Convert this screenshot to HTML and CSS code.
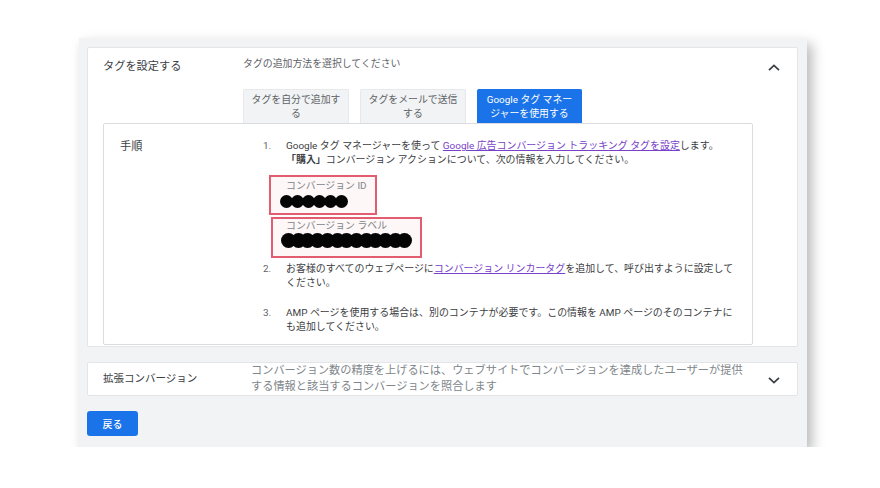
FILE: index.html
```html
<!DOCTYPE html>
<html lang="ja">
<head>
<meta charset="utf-8">
<title>タグを設定する</title>
<link rel="stylesheet" href="styles.css">
</head>
<body>
<div class="panel">
  <section class="card card-tag">
    <div class="card-head">
      <div class="card-title">タグを設定する</div>
      <div class="card-desc">タグの追加方法を選択してください</div>
      <svg class="chev chev-up" width="12" height="7" viewBox="0 0 12 7"><path d="M1 6.2 6 1.4l5 4.8" fill="none" stroke="#3c4043" stroke-width="1.8"/></svg>
    </div>
    <div class="tabs">
      <div class="tab">タグを自分で追加す<br>る</div>
      <div class="tab">タグをメールで送信<br>する</div>
      <div class="tab tab-active">Google タグ マネー<br>ジャーを使用する</div>
    </div>
    <div class="steps-box">
      <div class="steps-label">手順</div>
      <ol class="steps">
        <li class="step">
          <span class="num">1.</span>
          <div class="txt">
            <p>Google タグ マネージャーを使って <a href="#">Google 広告コンバージョン トラッキング タグを設定</a>します。<br><b>「購入」</b>コンバージョン アクションについて、次の情報を入力してください。</p>
            <div class="redbox redbox-id">
              <div class="field-label">コンバージョン ID</div>
              <div class="blackout bo-id"><i></i><i></i><i></i><i></i><i></i><i></i></div>
            </div>
            <div class="redbox redbox-label">
              <div class="field-label">コンバージョン ラベル</div>
              <div class="blackout bo-label"><i></i><i></i><i></i><i></i><i></i><i></i><i></i><i></i><i></i><i></i><i></i><i></i><i></i></div>
            </div>
          </div>
        </li>
        <li class="step step-2">
          <span class="num">2.</span>
          <div class="txt"><p>お客様のすべてのウェブページに<a href="#">コンバージョン リンカータグ</a>を追加して、呼び出すように設定して<br>ください。</p></div>
        </li>
        <li class="step step-3">
          <span class="num">3.</span>
          <div class="txt"><p>AMP ページを使用する場合は、別のコンテナが必要です。この情報を AMP ページのそのコンテナに<br>も追加してください。</p></div>
        </li>
      </ol>
    </div>
  </section>

  <section class="card card-ext">
    <div class="ext-title">拡張コンバージョン</div>
    <div class="ext-desc">コンバージョン数の精度を上げるには、ウェブサイトでコンバージョンを達成したユーザーが提供<br>する情報と該当するコンバージョンを照合します</div>
    <svg class="chev chev-down" width="12" height="7" viewBox="0 0 12 7"><path d="M1 0.8 6 5.6l5-4.8" fill="none" stroke="#3c4043" stroke-width="1.8"/></svg>
  </section>

  <button class="back">戻る</button>
</div>
</body>
</html>
```
FILE: styles.css
```css
* { box-sizing: border-box; }
body {
  margin: 0;
  background: #ffffff;
  font-family: Roboto, "Noto Sans CJK JP", sans-serif;
  color: #3c4043;
}
.panel {
  margin: 38px 0 0 79px;
  width: 728px;
  padding: 9px 9px 11px 8px;
  background: #f1f3f4;
  box-shadow: 5px 6px 12px rgba(0, 0, 0, 0.28);
}
.card {
  background: #ffffff;
  border: 1px solid #e3e5e8;
  border-radius: 2px;
}
.card-tag { padding-bottom: 1px; }
.card-head {
  display: flex;
  align-items: flex-start;
  height: 41px;
  padding: 9px 0 0 15px;
}
.card-title {
  width: 140px;
  font-size: 11.2px;
  line-height: 20px;
  color: #3c4043;
  white-space: nowrap;
}
.card-desc {
  font-size: 9.9px;
  line-height: 14px;
  color: #5f6368;
  white-space: nowrap;
}
.chev { display: block; flex: none; }
.chev-up { margin: 7px 17px 0 auto; }
.tabs {
  display: flex;
  gap: 11px;
  margin-left: 155px;
  height: 34px;
}
.tab {
  width: 106px;
  height: 34px;
  padding-top: 3px;
  font-size: 9.9px;
  line-height: 14px;
  text-align: center;
  color: #5f6368;
  background: #f1f3f4;
  border: 1px solid #e6e8ea;
  border-bottom: none;
  border-radius: 2px 2px 0 0;
  white-space: nowrap;
}
.tab-active {
  width: 105px;
  background: #1a73e8;
  border-color: #1a73e8;
  color: #ffffff;
}
.steps-box {
  display: flex;
  margin-left: 15px;
  width: 650px;
  border: 1px solid #dadce0;
  border-radius: 2px;
  padding: 15px 0 10px 16px;
}
.steps-label {
  width: 143px;
  flex: none;
  font-size: 11.2px;
  line-height: 16px;
  color: #3c4043;
}
.steps {
  list-style: none;
  margin: 0;
  padding: 0;
}
.step {
  display: flex;
  font-size: 9.95px;
  line-height: 14px;
  color: #3c4043;
}
.step-2 { margin-top: 4px; }
.step-3 { margin-top: 16px; }
.num { width: 23px; flex: none; color: #5f6368; }
.txt p { margin: 0; white-space: nowrap; }
.txt b { font-weight: 700; }
.txt a { color: #7642c9; text-decoration: underline; }
.redbox {
  border: 2px solid #e35d71;
  background: #fdf7f7;
}
.redbox-id {
  margin: 8px 0 0 -17px;
  width: 108px;
  height: 40px;
  padding: 2px 0 0 15px;
}
.redbox-label {
  margin: 2px 0 0 -15px;
  width: 151px;
  height: 41px;
  padding: 0 0 0 13px;
}
.field-label {
  font-size: 9.9px;
  line-height: 14px;
  color: #80868b;
  white-space: nowrap;
}
.blackout { display: flex; }
.blackout i {
  display: block;
  flex: none;
  border-radius: 50%;
  background: #050505;
}
.bo-id { margin: 2px 0 0 -6px; }
.bo-id i { width: 13px; height: 13px; }
.bo-id i + i { margin-left: -2px; }
.bo-label { margin: 0 0 0 -5px; }
.bo-label i { width: 15px; height: 15px; }
.bo-label i + i { margin-left: -5.3px; }
.card-ext {
  display: flex;
  align-items: center;
  margin-top: 15px;
  height: 34px;
  padding-left: 15px;
}
.ext-title {
  width: 148px;
  flex: none;
  font-size: 10.5px;
  line-height: 16px;
  color: #3c4043;
  white-space: nowrap;
}
.ext-desc {
  font-size: 11.2px;
  line-height: 16px;
  color: #80868b;
  white-space: nowrap;
}
.chev-down { margin: 2px 17px 0 auto; }
.back {
  display: block;
  margin-top: 15px;
  width: 51px;
  height: 25px;
  padding: 0;
  border: none;
  border-radius: 3px;
  background: #1a73e8;
  color: #ffffff;
  font-family: Roboto, "Noto Sans CJK JP", sans-serif;
  font-size: 9.9px;
  font-weight: 500;
}
```
